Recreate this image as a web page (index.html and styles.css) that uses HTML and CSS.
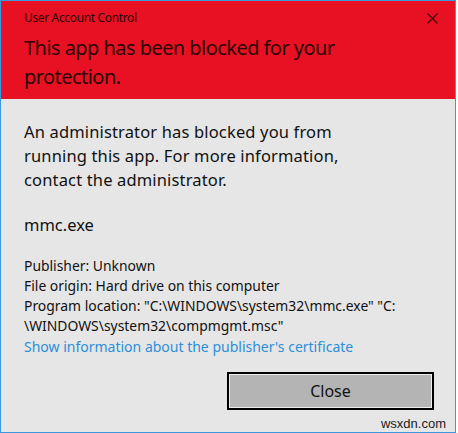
FILE: index.html
```html
<!DOCTYPE html>
<html>
<head>
<meta charset="utf-8">
<link rel="stylesheet" href="styles.css">
</head>
<body>
<div class="dialog">
  <div class="header">
    <div class="titlebar">
      <span class="app-title">User Account Control</span>
      <svg class="close-x" width="11" height="11" viewBox="0 0 11 11"><path d="M0.5 0.5 L10.5 10.5 M10.5 0.5 L0.5 10.5" stroke="#3a0a0a" stroke-width="1.1" fill="none"/></svg>
    </div>
    <h1 class="heading">This app has been blocked for your protection.</h1>
  </div>
  <div class="content">
    <p class="message">An administrator has blocked you from running this app. For more information, contact the administrator.</p>
    <p class="filename">mmc.exe</p>
    <div class="details">
      <div>Publisher: Unknown</div>
      <div>File origin: Hard drive on this computer</div>
      <div>Program location: "C:\WINDOWS\system32\mmc.exe" "C:<br>\WINDOWS\system32\compmgmt.msc"</div>
      <a class="cert-link" href="#">Show information about the publisher's certificate</a>
    </div>
    <div class="actions">
      <button class="close-btn">Close</button>
    </div>
  </div>
  <span class="watermark">wsxdn.com</span>
</div>
</body>
</html>
```

FILE: styles.css
```css
html, body {
  margin: 0;
  padding: 0;
  background: #ffffff;
}
body {
  font-family: "Noto Sans", "Open Sans", sans-serif;
  width: 458px;
  height: 433px;
  overflow: hidden;
}
.dialog {
  position: relative;
  box-sizing: border-box;
  width: 456px;
  height: 433px;
  border: 1px solid #3d97de;
  background: #e6e6e6;
  display: flex;
  flex-direction: column;
}
.header {
  background: #e81123;
  height: 98px;
  box-sizing: border-box;
  padding: 8px 0 0 23px;
  color: #2a0404;
}
.titlebar {
  display: flex;
  justify-content: space-between;
  align-items: center;
  padding-right: 17px;
}
.app-title {
  font-size: 12px;
  line-height: 18px;
  letter-spacing: -0.35px;
}
.close-x {
  display: block;
  margin-top: 1px;
}
.heading {
  margin: 6px 0 0 0;
  font-weight: normal;
  font-size: 20px;
  line-height: 29px;
  letter-spacing: -0.55px;
  width: 330px;
}
.content {
  flex: 1;
  padding: 21px 0 0 23px;
  color: #111;
  display: flex;
  flex-direction: column;
}
.message {
  margin: 0;
  font-size: 16.5px;
  line-height: 24px;
  width: 340px;
  letter-spacing: 0.15px;
}
.filename {
  margin: 21px 0 0 0;
  font-size: 16.5px;
  line-height: 24px;
}
.details {
  margin-top: 19px;
  font-size: 13.9px;
  line-height: 20px;
  display: flex;
  flex-direction: column;
}
.cert-link {
  color: #2d8fd8;
  text-decoration: none;
  font-size: 14px;
  line-height: 21px;
}
.actions {
  display: flex;
  justify-content: flex-end;
  padding-right: 21px;
  margin-top: 15px;
}
.close-btn {
  width: 207px;
  height: 38px;
  box-sizing: border-box;
  border: 2px solid #000;
  outline: none;
  box-shadow: inset 0 0 0 1px #ededed;
  background: #b4b4b4;
  font-family: "Noto Sans", "Open Sans", sans-serif;
  font-size: 16px;
  color: #111;
  padding: 0;
}
.watermark {
  position: absolute;
  right: 9px;
  bottom: 1px;
  font-family: "Liberation Sans", Arial, sans-serif;
  font-size: 13px;
  color: #222;
}
```
